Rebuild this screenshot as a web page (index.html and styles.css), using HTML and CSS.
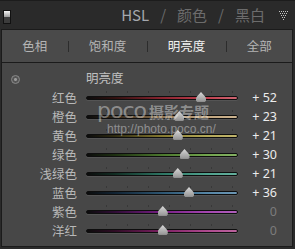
FILE: index.html
```html
<!DOCTYPE html>
<html lang="zh">
<head>
<meta charset="utf-8">
<link rel="stylesheet" href="styles.css">
</head>
<body>
<div class="topbar">
  <span class="toggle"><span class="toggle-on"></span><span class="toggle-off"></span></span>
  <nav class="modes">
    <span class="mode active">HSL</span>
    <span class="slash">/</span>
    <span class="mode">颜色</span>
    <span class="slash">/</span>
    <span class="mode">黑白</span>
  </nav>
  <svg class="tri" width="9" height="9" viewBox="0 0 9 9">
    <g fill="#c4c4c4">
      <rect x="0" y="0" width="1" height="1"/><rect x="2" y="0" width="1" height="1"/><rect x="4" y="0" width="1" height="1"/><rect x="6" y="0" width="1" height="1"/><rect x="8" y="0" width="1" height="1"/>
      <rect x="1" y="2" width="1" height="1"/><rect x="3" y="2" width="1" height="1"/><rect x="5" y="2" width="1" height="1"/><rect x="7" y="2" width="1" height="1"/>
      <rect x="2" y="4" width="1" height="1"/><rect x="4" y="4" width="1" height="1"/><rect x="6" y="4" width="1" height="1"/>
      <rect x="3" y="6" width="1" height="1"/><rect x="5" y="6" width="1" height="1"/>
      <rect x="4" y="8" width="1" height="1"/>
    </g>
  </svg>
</div>
<div class="frame">
  <div class="tabs">
    <span class="tab">色相</span><span class="sep"></span>
    <span class="tab">饱和度</span><span class="sep"></span>
    <span class="tab active">明亮度</span><span class="sep"></span>
    <span class="tab">全部</span>
  </div>
  <div class="panel">
    <div class="grid">
      <div class="cell-icon"><span class="target"></span></div>
      <div class="title">明亮度</div>
      <div></div>

      <div class="label">红色</div>
      <div class="slot"><div class="track red"><span class="thumb" style="left:76%"></span></div></div>
      <div class="value">+ 52</div>

      <div class="label">橙色</div>
      <div class="slot"><div class="track orange"><span class="thumb" style="left:61.5%"></span></div></div>
      <div class="value">+ 23</div>

      <div class="label">黄色</div>
      <div class="slot"><div class="track yellow"><span class="thumb" style="left:60.5%"></span></div></div>
      <div class="value">+ 21</div>

      <div class="label">绿色</div>
      <div class="slot"><div class="track green"><span class="thumb" style="left:65%"></span></div></div>
      <div class="value">+ 30</div>

      <div class="label">浅绿色</div>
      <div class="slot"><div class="track aqua"><span class="thumb" style="left:60.5%"></span></div></div>
      <div class="value">+ 21</div>

      <div class="label">蓝色</div>
      <div class="slot"><div class="track blue"><span class="thumb" style="left:68%"></span></div></div>
      <div class="value">+ 36</div>

      <div class="label">紫色</div>
      <div class="slot"><div class="track purple"><span class="thumb" style="left:50.5%"></span></div></div>
      <div class="value zero">0</div>

      <div class="label">洋红</div>
      <div class="slot"><div class="track magenta"><span class="thumb" style="left:50.5%"></span></div></div>
      <div class="value zero">0</div>
    </div>
    <div class="watermark">
      <div class="wm-line"><span class="wm-poco">poco</span><span class="wm-cn">摄影专题</span></div>
      <div class="wm-url">http://photo.poco.cn/</div>
    </div>
  </div>
</div>
</body>
</html>
```
FILE: styles.css
```css
html, body {
  margin: 0;
  padding: 0;
}
body {
  width: 295px;
  height: 249px;
  overflow: hidden;
  background: #2a2a2a;
  font-family: "Noto Sans CJK SC", "Noto Sans", sans-serif;
  border-top: 1px solid #1c1c1c;
  box-sizing: border-box;
}
.topbar {
  height: 28px;
  display: flex;
  align-items: center;
  padding: 0 7px 0 3px;
  box-sizing: border-box;
}
.toggle {
  width: 8px;
  height: 14px;
  box-sizing: border-box;
  border: 1px solid #111;
  display: flex;
  flex-direction: column;
  margin-top: 4px;
}
.toggle-on {
  flex: 1;
  background: linear-gradient(#f4f4f4, #9a9a9a);
}
.toggle-off {
  flex: 1;
  background: #3c3c3c;
}
.modes {
  margin-left: auto;
  display: flex;
  align-items: center;
  gap: 11px;
  font-size: 15px;
  color: #6c6c6c;
  line-height: 20px;
}
.mode.active {
  color: #a4a8ae;
}
.slash {
  color: #6a6a6a;
}
.tri {
  margin-left: 14px;
  margin-top: 1px;
}
.frame {
  margin-left: 1px;
  width: 292px;
  box-sizing: border-box;
  border: 1px solid #1b1b1b;
}
.tabs {
  height: 32px;
  background: #4a4a4a;
  border-bottom: 1px solid #1b1b1b;
  display: flex;
  align-items: center;
  font-size: 12.5px;
  color: #b4b4b4;
}
.tab {
  flex: 1 1 auto;
  text-align: center;
  line-height: 32px;
}
.tab.active {
  color: #f2f2f2;
}
.sep {
  width: 1px;
  height: 11px;
  background: #2c2c2c;
}
.panel {
  position: relative;
  background: #474747;
  padding: 6px 0 6px 0;
}
.grid {
  display: grid;
  grid-template-columns: 84px 152px 39px;
  grid-auto-rows: 19px;
  align-items: center;
  font-size: 12.5px;
  color: #b8b8b8;
}
.cell-icon {
  padding-left: 9px;
  display: flex;
  align-items: center;
}
.target {
  width: 9px;
  height: 9px;
  box-sizing: border-box;
  border-radius: 50%;
  border: 1.5px solid #8a8a8a;
  background: radial-gradient(circle, #9a9a9a 0 1.3px, #555 1.6px);
  margin-top: 2px;
}
.title {
  padding-left: 0;
  color: #c0c0c0;
  margin-top: -2px;
}
.label {
  text-align: right;
  padding-right: 9px;
  line-height: 19px;
}
.slot {
  height: 19px;
  display: flex;
  align-items: center;
}
.track {
  position: relative;
  width: 100%;
  height: 4px;
  box-sizing: border-box;
  border: 1px solid #0e0e0e;
  border-radius: 2px;
  box-shadow: 0 1px 0 rgba(255, 255, 255, 0.07);
  margin-top: 1px;
}
.track::before {
  content: "";
  position: absolute;
  top: -6px;
  left: 19px;
  width: 128px;
  height: 2px;
  background: repeating-linear-gradient(to right, #383838 0 1px, transparent 1px 21px);
}
.thumb {
  position: absolute;
  top: 50%;
  width: 10px;
  height: 10px;
  transform: translate(-50%, -60%);
  background: linear-gradient(#e0e0e0, #8c8c8c);
  clip-path: polygon(50% 0, 90% 45%, 100% 62%, 100% 88%, 88% 100%, 12% 100%, 0 88%, 0 62%, 10% 45%);
}
.thumb::after {
  content: "";
  position: absolute;
  inset: 1px;
  background: linear-gradient(#d0d0d0, #9a9a9a);
  clip-path: polygon(50% 0, 90% 45%, 100% 62%, 100% 88%, 88% 100%, 12% 100%, 0 88%, 0 62%, 10% 45%);
}
.red { background: linear-gradient(to right, #0c0c0c 0%, #30100f 18%, #8a2430 50%, #c0404e 80%, #cc6672 100%); }
.orange { background: linear-gradient(to right, #0c0c0c 0%, #30261a 18%, #8c7250 50%, #c0a47e 80%, #ccb490 100%); }
.yellow { background: linear-gradient(to right, #0c0c0c 0%, #2e2a10 18%, #867a30 50%, #b4a858 80%, #c0b46c 100%); }
.green { background: linear-gradient(to right, #0c0c0c 0%, #1c2e10 18%, #4c782e 50%, #72a44e 80%, #84b064 100%); }
.aqua { background: linear-gradient(to right, #0c0c0c 0%, #102c22 18%, #2e7664 50%, #50a28e 80%, #64ae9c 100%); }
.blue { background: linear-gradient(to right, #0c0c0c 0%, #102232 18%, #2e5672 50%, #5686a6 80%, #6c96b4 100%); }
.purple { background: linear-gradient(to right, #0c0c0c 0%, #2e0c34 18%, #761e84 50%, #a446b0 80%, #b060bc 100%); }
.magenta { background: linear-gradient(to right, #0c0c0c 0%, #2e0c24 18%, #7c2062 50%, #ae4a8e 80%, #bc649e 100%); }
.value {
  text-align: right;
  font-family: "Noto Sans", sans-serif;
  font-size: 12.5px;
  color: #ececec;
  line-height: 19px;
}
.value.zero {
  color: #7c7c7c;
}
.watermark {
  position: absolute;
  left: 95px;
  top: 37px;
  color: rgba(255, 255, 255, 0.4);
  pointer-events: none;
}
.wm-line {
  display: flex;
  align-items: baseline;
  gap: 3px;
}
.wm-poco {
  font-family: "DejaVu Sans", sans-serif;
  font-size: 22px;
  line-height: 22px;
  letter-spacing: -1px;
}
.wm-cn {
  font-family: "Noto Sans CJK SC", sans-serif;
  font-size: 15px;
  font-weight: bold;
  line-height: 18px;
}
.wm-url {
  font-family: "Liberation Sans", sans-serif;
  font-size: 12px;
  line-height: 12px;
  margin-left: 10px;
  margin-top: 1px;
}
```
